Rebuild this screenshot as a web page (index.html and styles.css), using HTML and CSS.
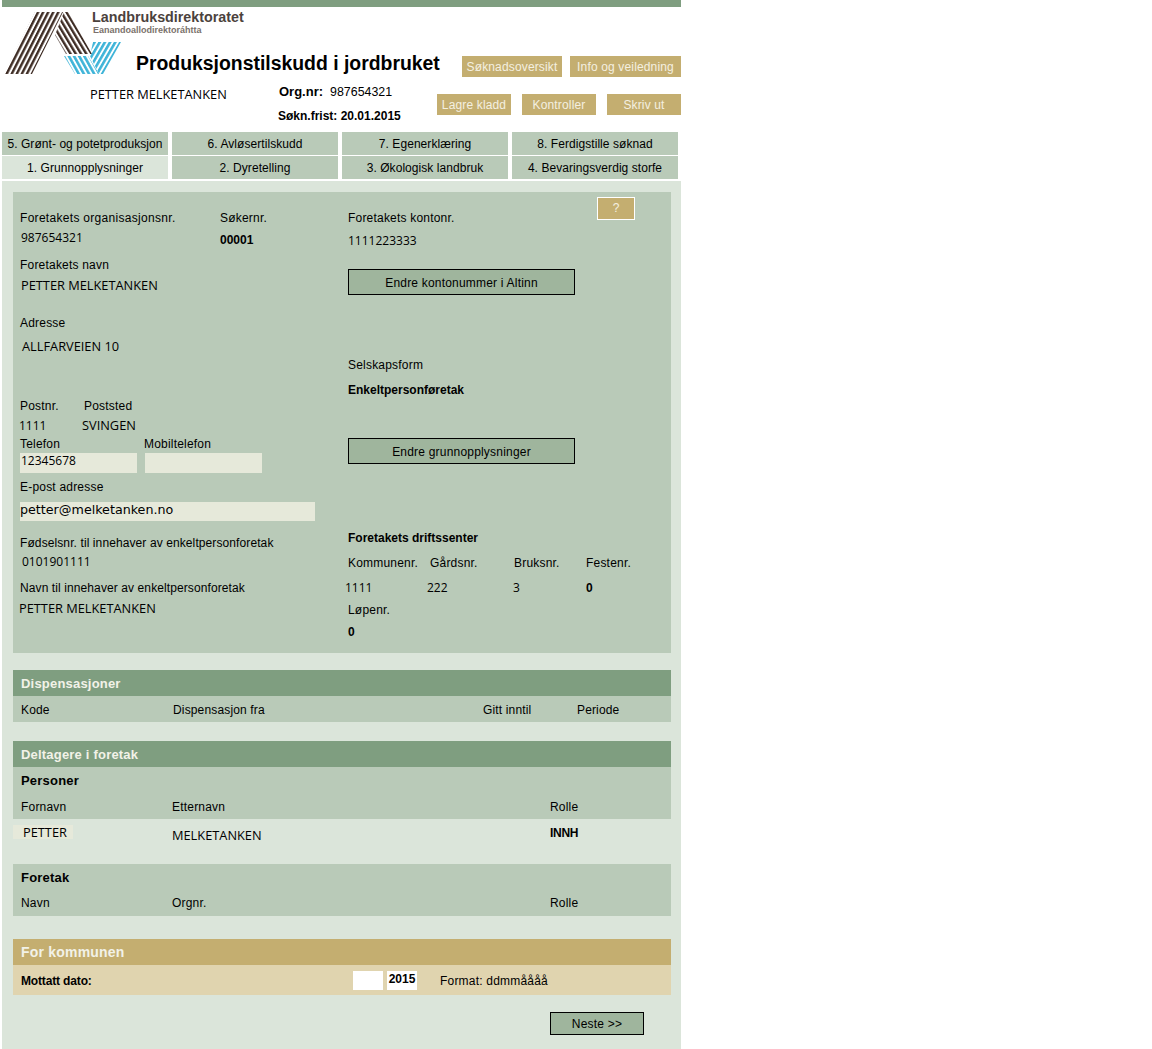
FILE: index.html
```html
<!DOCTYPE html>
<html>
	<head>
		<title>Produksjonstilskudd i jordbruket</title>
		<link rel="stylesheet" href="styles.css">
	</head>
	<body>
		<div class="page">
			<div class="topbar"></div>
			<div class="head-top">
				<svg class="logo" width="250" height="73" viewBox="0 0 250 73">
					<defs>
						<pattern id="brownL" width="4.5" height="8" patternUnits="userSpaceOnUse" patternTransform="rotate(27)"><rect width="2.4" height="8" fill="#3e2c24"/></pattern>
						<pattern id="brownR" width="4.5" height="8" patternUnits="userSpaceOnUse" patternTransform="rotate(-31)"><rect width="2.4" height="8" fill="#3e2c24"/></pattern>
						<pattern id="blueL" width="4.5" height="8" patternUnits="userSpaceOnUse" patternTransform="rotate(-29)"><rect width="2.6" height="8" fill="#3fb4d8"/></pattern>
						<pattern id="blueR" width="4.5" height="8" patternUnits="userSpaceOnUse" patternTransform="rotate(30)"><rect width="2.6" height="8" fill="#3fb4d8"/></pattern>
					</defs>
					<polygon points="36,5 64,5 33,67 5,67" fill="url(#brownL)"/>
					<polygon points="65,5 69,5 93,47 67,47 56,28" fill="url(#brownR)"/>
					<polygon points="65,49 89,49 100,67 76,67" fill="url(#blueL)"/>
					<polygon points="94,35 122,35 104,67 100,67 91,49" fill="url(#blueR)"/>
					<text class="brand-name" x="93" y="15">Landbruksdirektoratet</text>
					<text class="brand-sub" x="94" y="26">Eanandoallodirektoráhtta</text>
				</svg>
				<div class="title-row">
					<h1>Produksjonstilskudd i jordbruket</h1>
					<div class="btns btns-top">
						<a class="tan-btn btn-oversikt">Søknadsoversikt</a>
						<a class="tan-btn btn-info">Info og veiledning</a>
					</div>
				</div>
			</div>
			<div class="head-bottom">
				<div class="head-name typed name">PETTER MELKETANKEN</div>
				<div class="head-org">
					<div class="org-line"><b>Org.nr:</b><span>987654321</span></div>
					<div class="frist-line"><b>Søkn.frist: 20.01.2015</b></div>
				</div>
				<div class="btns btns-bottom">
					<a class="tan-btn">Lagre kladd</a>
					<a class="tan-btn">Kontroller</a>
					<a class="tan-btn">Skriv ut</a>
				</div>
			</div>
			<div class="tabs">
				<a class="tab">5. Grønt- og potetproduksjon</a>
				<a class="tab">6. Avløsertilskudd</a>
				<a class="tab">7. Egenerklæring</a>
				<a class="tab">8. Ferdigstille søknad</a>
				<a class="tab active">1. Grunnopplysninger</a>
				<a class="tab">2. Dyretelling</a>
				<a class="tab">3. Økologisk landbruk</a>
				<a class="tab">4. Bevaringsverdig storfe</a>
			</div>
			<div class="main">
				<div class="panel">
					<div class="col-left">
						<div class="pair">
							<div class="w200">
								<div class="line wide-text">Foretakets organisasjonsnr.</div>
								<div class="line typed mt4 in1">987654321</div>
							</div>
							<div>
								<div class="line">Søkernr.</div>
								<div class="line mt6"><b>00001</b></div>
							</div>
						</div>
						<div class="line mt9">Foretakets navn</div>
						<div class="line typed name mt5 in1">PETTER MELKETANKEN</div>
						<div class="line mt21">Adresse</div>
						<div class="line typed name mt8 in2">ALLFARVEIEN 10</div>
						<div class="pair mt43">
							<div class="w64">
								<div class="line">Postnr.</div>
								<div class="line typed mt4 out1">1111</div>
							</div>
							<div>
								<div class="line">Poststed</div>
								<div class="line typed name mt4 out2">SVINGEN</div>
							</div>
						</div>
						<div class="pair mt2">
							<div class="w124">
								<div class="line">Telefon</div>
								<div class="input phone mt1 typed">12345678</div>
							</div>
							<div>
								<div class="line">Mobiltelefon</div>
								<div class="input phone mt1 in1"></div>
							</div>
						</div>
						<div class="line mt6">E-post adresse</div>
						<div class="input email mt7">petter@melketanken.no</div>
						<div class="line tight mt14">Fødselsnr. til innehaver av enkeltpersonforetak</div>
						<div class="line typed mt3 in2">0101901111</div>
						<div class="line tight mt10">Navn til innehaver av enkeltpersonforetak</div>
						<div class="line typed name mt5 out1">PETTER MELKETANKEN</div>
					</div>
					<div class="col-right">
						<div class="acct-row">
							<div class="acct">
								<div class="line">Foretakets kontonr.</div>
								<div class="line typed mt7">1111223333</div>
							</div>
							<a class="help-btn">?</a>
						</div>
						<a class="green-btn wide mt20">Endre kontonummer i Altinn</a>
						<div class="line mt62">Selskapsform</div>
						<div class="line mt9"><b>Enkeltpersonføretak</b></div>
						<a class="green-btn wide mt40">Endre grunnopplysninger</a>
						<div class="line mt66"><b>Foretakets driftssenter</b></div>
						<div class="drift mt9">
							<div class="line">Kommunenr.</div>
							<div class="line">Gårdsnr.</div>
							<div class="line">Bruksnr.</div>
							<div class="line">Festenr.</div>
							<div class="line typed out3 mt9">1111</div>
							<div class="line typed out3 mt9">222</div>
							<div class="line typed out1 mt9">3</div>
							<div class="line mt9"><b>0</b></div>
						</div>
						<div class="line mt6">Løpenr.</div>
						<div class="line mt6"><b>0</b></div>
					</div>
				</div>

				<div class="section sec-disp">
					<div class="sec-head">Dispensasjoner</div>
					<div class="row-disp">
						<span>Kode</span><span>Dispensasjon fra</span><span>Gitt inntil</span><span>Periode</span>
					</div>
				</div>

				<div class="section sec-delt">
					<div class="sec-head">Deltagere i foretak</div>
					<div class="sub-block">
						<div class="sub-title">Personer</div>
						<div class="row-delt"><span>Fornavn</span><span>Etternavn</span><span>Rolle</span></div>
					</div>
					<div class="person">
						<span class="typed name first"><span class="patch">PETTER</span></span>
						<span class="typed name last">MELKETANKEN</span>
						<b class="role">INNH</b>
					</div>
					<div class="sub-block">
						<div class="sub-title">Foretak</div>
						<div class="row-delt row-foretak"><span>Navn</span><span>Orgnr.</span><span>Rolle</span></div>
					</div>
				</div>

				<div class="section sec-kom">
					<div class="sec-head tan">For kommunen</div>
					<div class="kom-row">
						<b class="kom-label">Mottatt dato:</b>
						<div class="date-box"></div>
						<div class="date-box"><b>2015</b></div>
						<span class="kom-format">Format: ddmmåååå</span>
					</div>
				</div>

				<div class="next-row">
					<a class="green-btn next">Neste &gt;&gt;</a>
				</div>
			</div>
		</div>
	</body>
</html>
```

FILE: styles.css
```css
* {
	margin: 0; padding: 0;
	box-sizing: border-box;
}

body {
	font-family: "Liberation Sans", Arial, sans-serif;
	font-size: 12px;
	color: #000;
	background: #fff;
}

.page {
	width: 679px;
	margin-left: 2px;
}

.topbar {
	height: 7px;
	background: #7f9e80;
}

/* header */
.head-top {
	display: grid;
	height: 73px;
}

.logo {
	grid-area: 1 / 1;
	display: block;
	margin-left: -3px;
}

.brand-name {
	font-size: 14.3px;
	font-weight: bold;
	fill: #4b423d;
}

.brand-sub {
	font-size: 9px;
	font-weight: bold;
	fill: #7a716b;
}

.title-row {
	grid-area: 1 / 1;
	align-self: end;
	display: flex;
	justify-content: space-between;
	padding-left: 134px;
	height: 30px;
}

h1 {
	font-size: 19.4px;
	line-height: 26px;
	color: #000;
}

.btns {
	display: flex;
}

.btns-top {
	gap: 8px;
	margin-top: 6px;
}

.btn-oversikt { width: 100px; }
.btn-info { width: 111px; }

.tan-btn {
	display: block;
	height: 21px;
	line-height: 23px;
	text-align: center;
	background: #c4ae70;
	color: #f4f0e0;
	letter-spacing: 0.15px;
}

.head-bottom {
	display: flex;
	height: 52px;
}

.head-name {
	width: 277px;
	padding-left: 88px;
	padding-top: 5px;
}

.head-org {
	width: 158px;
	padding-top: 4px;
}

.org-line {
	display: flex;
	gap: 7px;
	line-height: 16px;
}

.org-line b {
	font-size: 13px;
}

.org-line span {
	font-size: 12.4px;
}

.frist-line {
	line-height: 16px;
	margin-top: 8px;
	margin-left: -1px;
}

.btns-bottom {
	gap: 11px;
	margin-top: 14px;
}

.btns-bottom .tan-btn {
	width: 74px;
}

.tabs {
	display: grid;
	grid-template-columns: repeat(4, 166px);
	grid-auto-rows: 23px;
	column-gap: 4px;
	row-gap: 1px;
}

.tab {
	line-height: 25px;
	text-align: center;
	background: #b9cab8;
	letter-spacing: 0.06px;
}

.tab.active {
	background: #dbe5da;
}

/* main */
.main {
	margin-top: 2px;
	height: 868px;
	padding: 11px 10px 0 11px;
	background: #dbe5da;
}

.panel {
	display: flex;
	height: 461px;
	padding: 5px 36px 0 7px;
	background: #b9cab8;
}

.col-left {
	width: 328px;
	padding-top: 13px;
}

.col-right {
	flex: 1;
}

.line {
	line-height: 16px;
	height: 16px;
	letter-spacing: 0.2px;
	white-space: nowrap;
}

.line b {
	letter-spacing: 0;
}

.wide-text { letter-spacing: 0.3px; }
.tight { letter-spacing: 0.1px; }

.typed {
	font-family: "Open Sans", sans-serif;
	font-size: 12px;
	letter-spacing: 0;
}

.typed.name {
	font-size: 12.8px;
}

.line.name {
	line-height: 14px;
}

.pair { display: flex; }
.w200 { width: 200px; }
.w64 { width: 64px; }
.w124 { width: 124px; }

.in1 { margin-left: 1px; }
.in2 { margin-left: 2px; }
.out1 { margin-left: -1px; }
.out2 { margin-left: -2px; }
.out3 { margin-left: -3px; }

.mt1 { margin-top: 1px; }
.mt2 { margin-top: 2px; }
.mt3 { margin-top: 3px; }
.mt4 { margin-top: 4px; }
.mt5 { margin-top: 5px; }
.mt6 { margin-top: 6px; }
.mt7 { margin-top: 7px; }
.mt8 { margin-top: 8px; }
.mt9 { margin-top: 9px; }
.mt10 { margin-top: 10px; }
.mt14 { margin-top: 14px; }
.mt20 { margin-top: 20px; }
.mt21 { margin-top: 21px; }
.mt40 { margin-top: 40px; }
.mt43 { margin-top: 43px; }
.mt62 { margin-top: 62px; }
.mt66 { margin-top: 66px; }

.input {
	background: #e6e9da;
	padding-left: 1px;
}

.phone {
	width: 117px;
	height: 20px;
	line-height: 15px;
}

.email {
	width: 295px;
	height: 19px;
	line-height: 15px;
	padding-left: 0;
	font-family: "DejaVu Sans", sans-serif;
	font-size: 12.7px;
}

.acct-row {
	display: flex;
	justify-content: space-between;
	align-items: flex-start;
}

.acct {
	padding-top: 13px;
}

.help-btn {
	width: 38px;
	height: 23px;
	line-height: 21px;
	text-align: center;
	background: #c4ae70;
	border: 1px solid #fff;
	color: #f4f0e0;
}

.green-btn {
	display: block;
	background: #9fb59d;
	border: 1px solid #000;
	text-align: center;
	letter-spacing: 0.2px;
}

.wide {
	width: 227px;
	height: 26px;
	line-height: 27px;
}

.drift {
	display: grid;
	grid-template-columns: 82px 84px 72px 1fr;
}

.section {
	background: #b9cab8;
}

.sec-disp { margin-top: 17px; }
.sec-delt {
	margin-top: 19px;
	background: #dbe5da;
}
.sec-kom { margin-top: 23px; }

.sec-head {
	height: 26px;
	line-height: 28px;
	padding-left: 8px;
	background: #7f9e80;
	color: #f2f2e8;
	font-size: 13px;
	font-weight: bold;
	letter-spacing: 0.2px;
}

.sec-head.tan {
	background: #c4ae70;
	font-size: 14px;
	line-height: 26px;
}

.row-disp {
	display: grid;
	grid-template-columns: 152px 310px 94px 1fr;
	height: 26px;
	line-height: 28px;
	padding-left: 8px;
	letter-spacing: 0.15px;
}

.sub-block {
	height: 52px;
	padding-left: 8px;
	background: #b9cab8;
}

.sub-title {
	height: 26px;
	line-height: 28px;
	font-size: 13px;
	font-weight: bold;
	letter-spacing: 0.2px;
}

.row-delt {
	display: grid;
	grid-template-columns: 151px 378px 1fr;
	height: 26px;
	line-height: 28px;
	letter-spacing: 0.2px;
}

.row-foretak {
	line-height: 26px;
}

.person {
	display: grid;
	grid-template-columns: 151px 378px 1fr;
	height: 45px;
	padding-left: 8px;
}

.patch {
	display: inline-block;
	width: 60px;
	height: 14px;
	line-height: 14px;
	margin-left: -8px;
	padding-left: 10px;
	background: #e6e9da;
}

.first { padding-top: 4px; }
.last { padding-top: 7px; }
.role {
	padding-top: 7px;
	letter-spacing: -0.3px;
}

.kom-row {
	display: flex;
	align-items: center;
	height: 30px;
	padding-left: 8px;
	background: #e0d4af;
}

.kom-label {
	width: 332px;
	padding-top: 2px;
	letter-spacing: -0.15px;
}

.date-box {
	width: 30px;
	height: 19px;
	line-height: 17px;
	margin-right: 4px;
	text-align: center;
	background: #fff;
	color: #000;
}

.kom-format {
	margin-left: 19px;
	padding-top: 2px;
	letter-spacing: 0.2px;
}

.next-row {
	display: flex;
	justify-content: flex-end;
	margin-top: 17px;
	padding-right: 27px;
}

.next {
	width: 94px;
	height: 23px;
	line-height: 22px;
}
```
